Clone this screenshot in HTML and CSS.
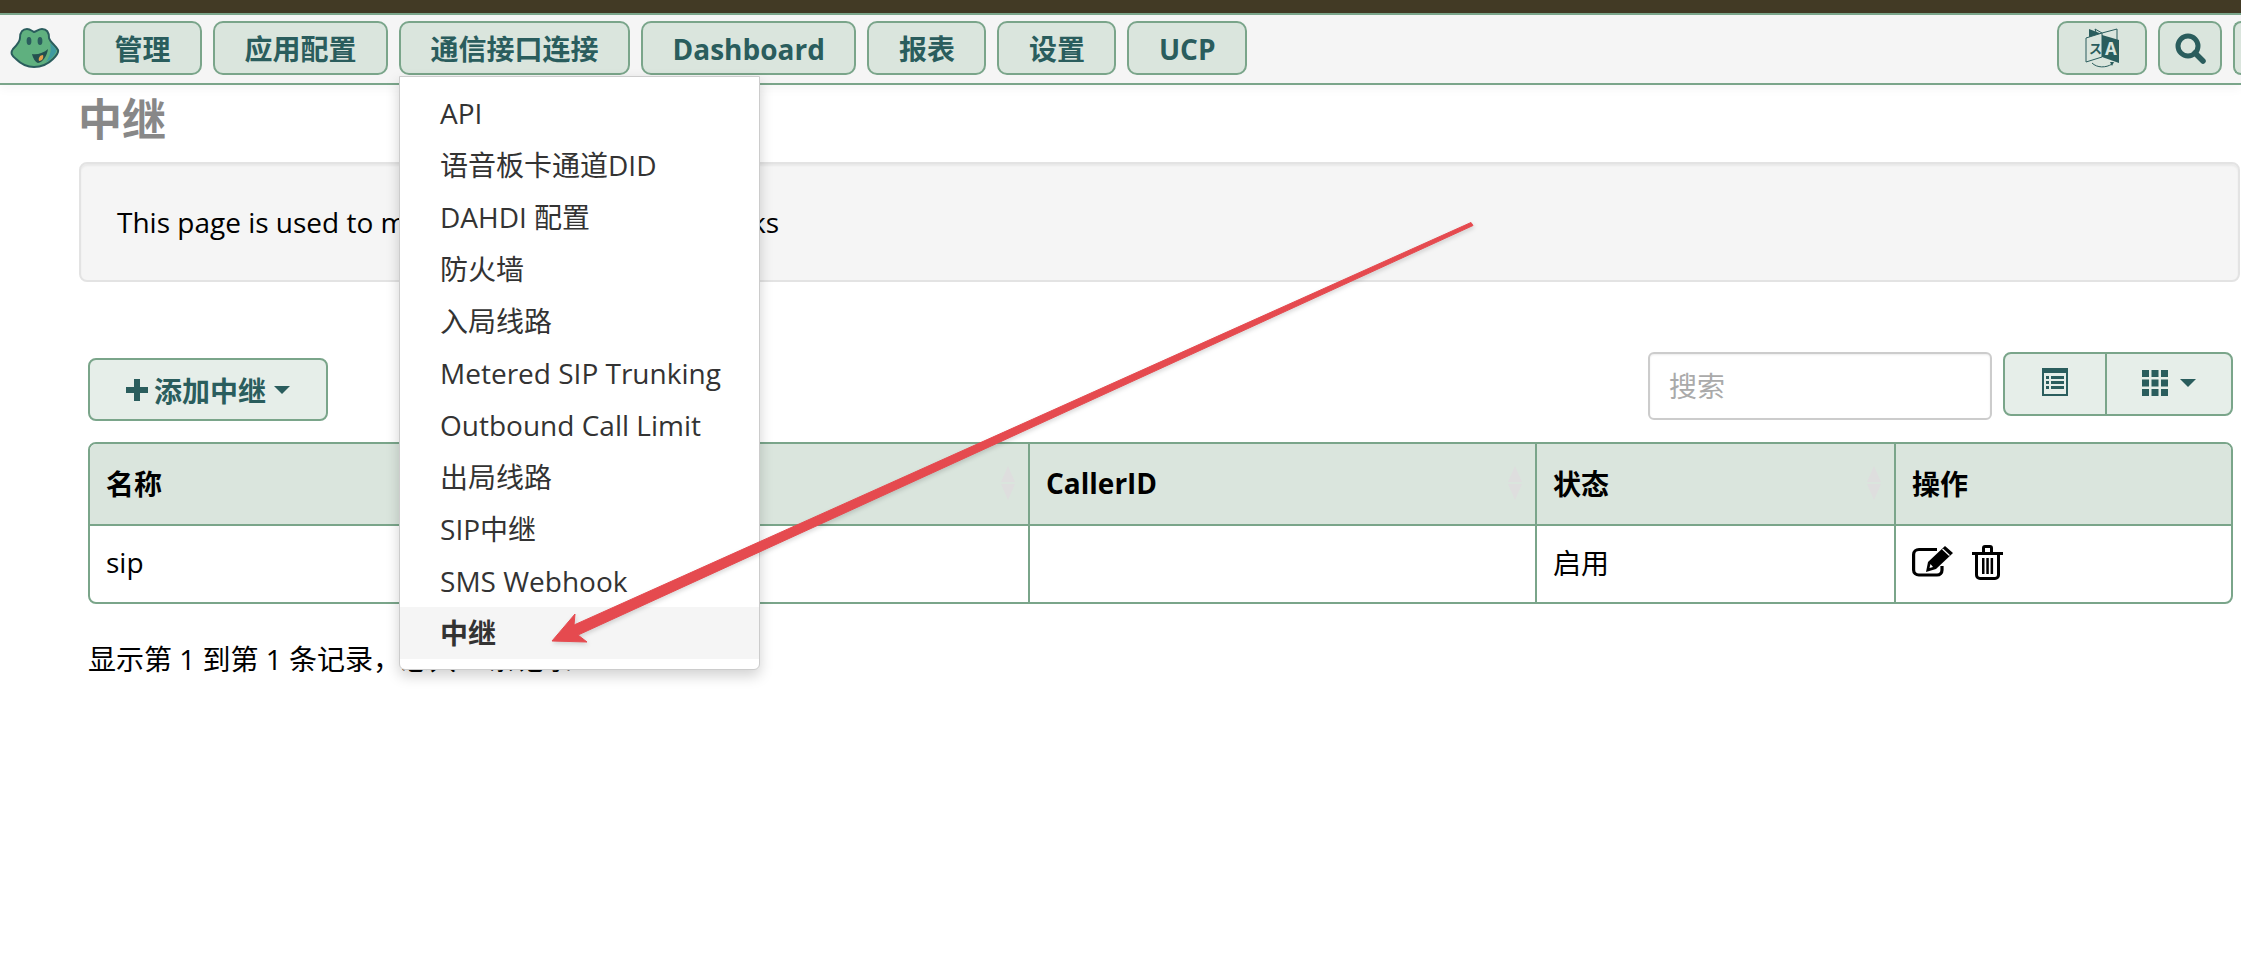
FILE: index.html
```html
<!DOCTYPE HTML>
<html>
	<head>
		<title>中继</title>
		<meta charset="utf-8">
		<link rel="stylesheet" href="styles.css">
	</head>
	<body>
		<div class="topstrip"></div>
		<nav class="navbar">
			<svg class="logo" viewBox="0 0 51 40">
				<path d="M4 21C8 17 11 14 11 10C11 4 14 1 18 1C21 1 23 3 25 4C28 3 30 1 33 1C38 1 40 4 40 10C41 14 46 17 49 22C50 25 47 28 44 31C39 36 32 39 25 39C18 39 12 36 7 31C3 28 1 25 4 21Z" fill="#5fb07f" stroke="#2a5d5d" stroke-width="2"/>
				<path d="M41 15C46 19 48 22 47 24C45 28 41 32 37 34C41 28 43 22 41 15Z" fill="#3f9aa0"/>
				<ellipse cx="20" cy="13" rx="2.4" ry="4" fill="#2a5d5d"/>
				<ellipse cx="31" cy="13" rx="2.4" ry="4" fill="#2a5d5d"/>
				<path d="M23 26C28 27 35 25 39 21C38 28 34 34 29 35C26 34 24 30 23 26Z" fill="#24504f"/>
				<path d="M30 33C29 30 31 27 34 27C35 30 33 33 30 33Z" fill="#e8a04c"/>
			</svg>
			<div class="navleft">
				<a class="navbtn">管理</a>
				<a class="navbtn">应用配置</a>
				<div class="navitem">
					<a class="navbtn">通信接口连接</a>
					<ul class="dropmenu">
						<li>API</li>
						<li>语音板卡通道DID</li>
						<li>DAHDI 配置</li>
						<li>防火墙</li>
						<li>入局线路</li>
						<li>Metered SIP Trunking</li>
						<li>Outbound Call Limit</li>
						<li>出局线路</li>
						<li>SIP中继</li>
						<li>SMS Webhook</li>
						<li class="active">中继</li>
					</ul>
				</div>
				<a class="navbtn">Dashboard</a>
				<a class="navbtn">报表</a>
				<a class="navbtn">设置</a>
				<a class="navbtn">UCP</a>
			</div>
			<div class="navright">
				<a class="navbtn langbtn">
					<svg class="langicon" viewBox="0 0 34 40">
						<path d="M10 1L17 5L32 1V30L17 25Z" fill="none" stroke="#2a5d5d" stroke-width="1"/>
						<path d="M4 1L17 6V11L4 9Z" fill="#2a5d5d"/>
						<path d="M1 10L17 5V29L1 34Z" fill="#dae5dd" stroke="#2a5d5d" stroke-width="1"/>
						<path d="M17 7L34 12V35L17 29Z" fill="#2a5d5d"/>
						<text x="20" y="27" class="langa">A</text>
						<text x="4" y="25" class="langz">ス</text>
						<path d="M7 35C12 40 21 40 27 36" fill="none" stroke="#2a5d5d" stroke-width="1"/>
						<path d="M29 34L25 34L27 38Z" fill="#2a5d5d"/>
					</svg>
				</a>
				<a class="navbtn searchbtn">
					<svg class="searchicon" viewBox="0 0 31 31">
						<circle cx="13" cy="13" r="10" fill="none" stroke="#2a5d5d" stroke-width="5"/>
						<path d="M20 20L28 28" stroke="#2a5d5d" stroke-width="5.5" stroke-linecap="round"/>
					</svg>
				</a>
				<a class="navbtn cutbtn"></a>
			</div>
		</nav>

		<div class="content">
			<h1 class="pagetitle">中继</h1>
			<div class="well">This page is used to manage various system trunks</div>

			<div class="listarea">
				<div class="toolbar">
					<a class="addbtn">
						<svg class="plusicon" viewBox="0 0 22 22"><path d="M8 0H14V8H22V14H14V22H8V14H0V8H8Z" fill="#2a5d5d"/></svg>
						添加中继
						<span class="caret"></span>
					</a>
					<div class="toolright">
						<input class="searchinput" placeholder="搜索">
						<div class="btngroup">
							<a class="groupbtn listbtn">
								<svg width="26" height="28" viewBox="0 0 26 28">
									<path fill-rule="evenodd" d="M0 0H26V28H0ZM2 5V26H24V5Z" fill="#2a5d5d"/>
									<path d="M4 8H7V11H4ZM9 8H22V11H9ZM4 13H7V16H4ZM9 13H22V16H9ZM4 18H7V21H4ZM9 18H22V21H9Z" fill="#2a5d5d"/>
								</svg>
							</a>
							<a class="groupbtn thbtn">
								<svg width="26" height="26" viewBox="0 0 26 26">
									<path d="M0 0H7V7H0ZM9.5 0H16.500V7H9.500ZM19 0H26V7H19ZM0 9.500H7V16.500H0ZM9.500 9.500H16.500V16.500H9.500ZM19 9.500H26V16.500H19ZM0 19H7V26H0ZM9.500 19H16.500V26H9.500ZM19 19H26V26H19Z" fill="#2a5d5d"/>
								</svg>
								<span class="caret"></span>
							</a>
						</div>
					</div>
				</div>

				<div class="tablewrap">
					<table class="datatable">
						<thead>
							<tr>
								<th class="col1"><div class="thin">名称<svg class="sorter" viewBox="0 0 14 34"><path d="M7 0L14 16H0ZM7 34L0 18H14Z"/></svg></div></th>
								<th class="col2"><div class="thin">中继类型<svg class="sorter" viewBox="0 0 14 34"><path d="M7 0L14 16H0ZM7 34L0 18H14Z"/></svg></div></th>
								<th class="col3"><div class="thin">CallerID<svg class="sorter" viewBox="0 0 14 34"><path d="M7 0L14 16H0ZM7 34L0 18H14Z"/></svg></div></th>
								<th class="col4"><div class="thin">状态<svg class="sorter" viewBox="0 0 14 34"><path d="M7 0L14 16H0ZM7 34L0 18H14Z"/></svg></div></th>
								<th class="col5"><div class="thin">操作</div></th>
							</tr>
						</thead>
						<tbody>
							<tr>
								<td>sip</td>
								<td>sip</td>
								<td></td>
								<td>启用</td>
								<td>
									<div class="actions">
										<svg width="41" height="32" viewBox="0 0 41 32">
											<path d="M25 3.500H7C4 3.500 1.600 5.500 1.600 8.500V24C1.600 27 4 29 7 29H25C28 29 30 27 30 24V20" fill="none" stroke="#000" stroke-width="3.200"/>
											<path d="M33 0L41 7L24 23L14 26L16 16ZM18.500 18L17.500 22L21 21Z" fill="#000" fill-rule="evenodd"/>
											<path d="M30.500 3L37.500 9.500" stroke="#fff" stroke-width="1.200"/>
										</svg>
										<svg width="31" height="36" viewBox="0 0 31 36">
											<path d="M0 8H31V11H0ZM10 8V4C10 2 11 1 13 1H18C20 1 21 2 21 4V8H18V4H13V8Z" fill="#000"/>
											<path d="M4.500 10V31C4.500 33 6 34.500 8 34.500H23C25 34.500 26.500 33 26.500 31V10" fill="none" stroke="#000" stroke-width="3"/>
											<path d="M10 14H12.500V30H10ZM14.300 14H16.800V30H14.300ZM18.600 14H21.100V30H18.600Z" fill="#000"/>
										</svg>
									</div>
								</td>
							</tr>
						</tbody>
					</table>
				</div>

				<p class="pageinfo">显示第 1 到第 1 条记录，总共 1 条记录</p>
			</div>
		</div>

		<svg class="arrow" width="2241" height="964" viewBox="0 0 2241 964">
			<path d="M1471 222.500L1473 225.500L578 635L587 642L552 641L575 614L574 625Z" fill="#e54a4f" stroke="#e54a4f" stroke-width="1" stroke-linejoin="round"/>
		</svg>
	</body>
</html>
```

FILE: styles.css
```css
*{ margin:0; padding:0; box-sizing:border-box; }
html,body{ height:100%; }
body{ font-family:"Open Sans","Noto Sans CJK SC",sans-serif; font-size:28px; color:#000; background:#fff; overflow:hidden; }

.topstrip{ height:13px; background:#423a25; }

.navbar{ height:72px; display:flex; align-items:flex-start; padding:6px 0 0 9px; background:#f5f5f5; border-top:2px solid #7aa58a; border-bottom:2px solid #7aa58a; box-shadow:0 4px 10px rgba(0,0,0,.04); }
.logo{ width:51px; height:40px; margin:7px 23px 0 0; flex:none; }
.navleft{ display:flex; gap:11px; flex:1; }
.navright{ display:flex; gap:11px; }
.navitem{ position:relative; }
.navbtn{ display:flex; align-items:center; justify-content:center; height:54px; padding:1px 29.5px 0; border:2px solid #7aa58a; border-radius:10px; background:#dae5dd; color:#2a5d5d; font-weight:700; line-height:1; white-space:nowrap; }
.langbtn{ width:90px; padding:0; }
.searchbtn{ width:64px; padding:0; }
.cutbtn{ width:8px; padding:0; border-right:0; border-radius:10px 0 0 10px; }
.langicon{ width:34px; height:40px; }
.langa{ font-size:17px; font-weight:700; fill:#dae5dd; }
.langz{ font-size:13px; fill:#2a5d5d; }
.searchicon{ width:31px; height:31px; }

.dropmenu{ position:absolute; left:0; top:55px; width:361px; padding:10px 0; list-style:none; background:#fff; border:1px solid #ccc; border-radius:0 0 6px 6px; box-shadow:0 6px 14px rgba(0,0,0,.18); z-index:10; }
.dropmenu li{ height:52px; line-height:52px; padding-left:40px; color:#333; white-space:nowrap; }
.dropmenu li.active{ background:#f5f5f5; font-weight:700; }

.content{ padding:0 1px 0 79px; }
.pagetitle{ height:77px; margin-left:-1px; font-size:44px; line-height:68px; font-weight:700; color:#888; }
.well{ height:120px; padding:0 36px; line-height:116px; background:#f5f5f5; border:2px solid #e3e3e3; border-radius:8px; box-shadow:inset 0 2px 2px rgba(0,0,0,.05); }

.listarea{ padding:70px 7px 0 9px; }
.toolbar{ display:flex; justify-content:space-between; align-items:flex-start; height:90px; }
.addbtn{ display:flex; align-items:center; justify-content:center; gap:6px; width:240px; height:63px; margin-top:6px; border:2px solid #7aa58a; border-radius:8px; background:#e6eee9; color:#2a5d5d; font-weight:700; }
.plusicon{ width:22px; height:22px; }
.caret{ width:0; height:0; margin-left:2px; border-left:8px solid transparent; border-right:8px solid transparent; border-top:8px solid #2a5d5d; }
.toolright{ display:flex; gap:11px; }
.searchinput{ width:344px; height:68px; padding:0 19px; border:2px solid #ccc; border-radius:6px; font:inherit; box-shadow:inset 0 1px 2px rgba(0,0,0,.08); outline:none; }
.searchinput::placeholder{ color:#aaa; }
.btngroup{ display:flex; width:230px; height:64px; border:2px solid #7aa58a; border-radius:8px; background:#e6eee9; }
.groupbtn{ display:flex; align-items:center; justify-content:center; }
.listbtn{ width:102px; border-right:2px solid #7aa58a; padding-bottom:5px; }
.thbtn{ flex:1; gap:10px; padding-bottom:2px; }

.tablewrap{ width:2145px; border:2px solid #7aa58a; border-radius:8px; overflow:hidden; }
.datatable{ width:100%; border-collapse:collapse; table-layout:fixed; }
.datatable th{ height:81px; text-align:left; padding:0 13px 2px 16px; background:#dae5dd; border-right:2px solid #7aa58a; border-bottom:2px solid #7aa58a; font-weight:700; }
.datatable td{ height:77px; padding:0 15px 4px 16px; border-right:2px solid #7aa58a; }
.datatable th:last-child,.datatable td:last-child{ border-right:0; }
.thin{ display:flex; justify-content:space-between; align-items:center; }
.sorter{ width:14px; height:34px; fill:#dedede; }
.col1{ width:471px; }
.col2{ width:468px; }
.col3{ width:507px; }
.col4{ width:359px; }
.actions{ display:flex; align-items:center; gap:19px; }

.pageinfo{ margin-top:35px; line-height:40px; }

.arrow{ position:absolute; left:0; top:0; pointer-events:none; z-index:20; filter:drop-shadow(1px 2px 2px rgba(0,0,0,.15)); }
```
